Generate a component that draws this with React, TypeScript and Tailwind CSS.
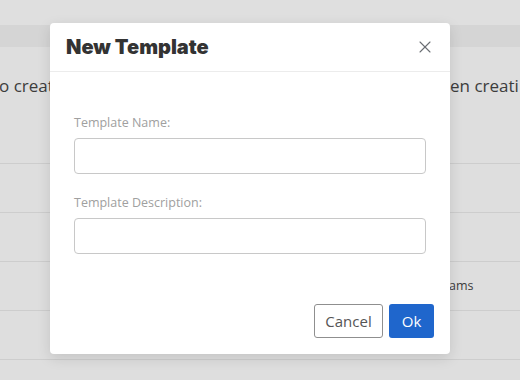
import React from 'react';
import { X } from 'lucide-react';

const rows = ['', '', 'ams', '', ''];

export default function App() {
  return (
    <div className="relative w-[520px] h-[380px] overflow-hidden bg-[#dedede] font-['Open_Sans',sans-serif] text-[#3c3c3c]">
      {/* page behind the backdrop */}
      <div className="h-[25px] bg-[#dfdfdf]" />
      <div className="h-[22px] bg-[#d5d5d5]" />
      <div className="h-[117px] border-b border-[#cdcdcd] pt-[27px]">
        <div className="flex text-[17px] leading-[24px] whitespace-nowrap">
          <span className="w-[451px] shrink-0 overflow-hidden -ml-[1px]">o create a new template from this</span>
          <span className="shrink-0">en creati</span>
        </div>
      </div>
      {rows.map((r, i) => (
        <div key={i} className="h-[49px] border-b border-[#cdcdcd] flex items-center">
          <span className="ml-[449px] text-[12.5px] whitespace-nowrap">{r}</span>
        </div>
      ))}

      {/* modal */}
      <div className="absolute left-[50px] top-[23px] w-[400px] h-[331px] bg-white rounded-[4px] shadow-[0_4px_14px_rgba(0,0,0,0.12)] flex flex-col">
        <div className="h-[49px] flex items-center justify-between pl-4 pr-[15px] border-b border-[#ececec]">
          <h2 className="font-['Inter',sans-serif] font-black text-[20px] text-[#333]">
            New Template
          </h2>
          <button type="button" className="text-[#6a6e73]">
            <X size={20} strokeWidth={1.3} />
          </button>
        </div>

        <div className="px-6 pt-[43px]">
          <label className="block text-[12.5px] leading-4 text-[#a0a0a0] mb-[7px]">Template Name:</label>
          <input
            type="text"
            className="block w-full h-[36px] rounded-[4px] border border-[#c8c8c8] outline-none px-2 text-sm"
          />
          <label className="block text-[12.5px] leading-4 text-[#a0a0a0] mt-[21px] mb-[7px]">
            Template Description:
          </label>
          <input
            type="text"
            className="block w-full h-[36px] rounded-[4px] border border-[#c8c8c8] outline-none px-2 text-sm"
          />
        </div>

        <div className="mt-auto flex justify-end gap-[6px] pr-4 pb-4">
          <button
            type="button"
            className="w-[69px] h-[34px] rounded-[3px] border border-[#8f8f8f] bg-white text-[15px] text-[#555]"
          >
            Cancel
          </button>
          <button
            type="button"
            className="w-[45px] h-[34px] rounded-[3px] bg-[#1f66cc] text-[15px] font-medium text-white"
          >
            Ok
          </button>
        </div>
      </div>
    </div>
  );
}
